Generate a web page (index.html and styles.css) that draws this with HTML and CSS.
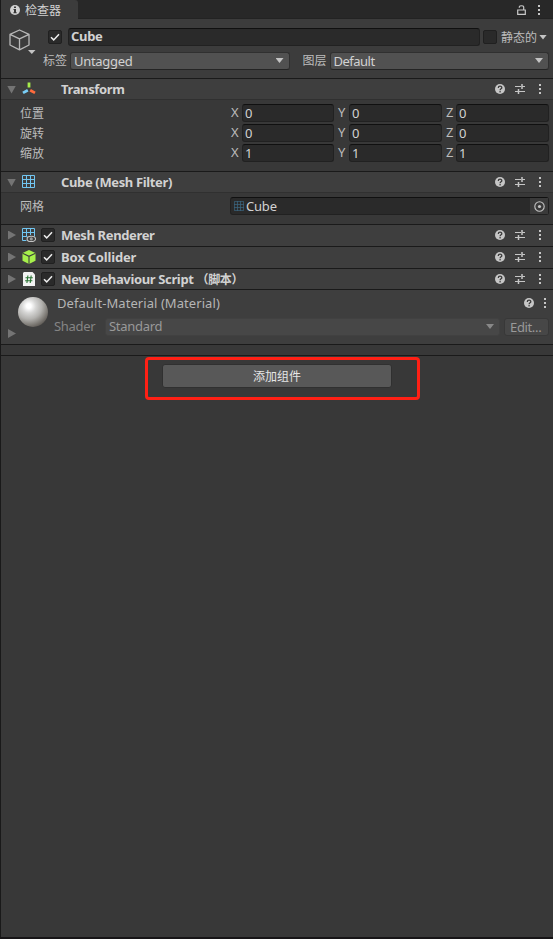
FILE: index.html
```html
<!DOCTYPE html>
<html lang="zh-CN">
<head>
<meta charset="utf-8">
<title>检查器</title>
<link rel="stylesheet" href="styles.css">
</head>
<body>
<svg class="defs" aria-hidden="true">
  <symbol id="help" viewBox="0 0 10 10"><circle cx="5" cy="5" r="5" fill="#c6c6c6"/><path d="M3.3 3.9C3.3 1.6 6.8 1.7 6.8 3.7C6.8 4.9 5.1 4.8 5.1 6.2" fill="none" stroke="#3b3b3b" stroke-width="1.3"/><rect x="4.4" y="7.1" width="1.4" height="1.3" fill="#3b3b3b"/></symbol>
  <symbol id="preset" viewBox="0 0 10 10"><path d="M0 2.5h6M7 2.5h3M0 7.5h3M4 7.5h6" stroke="#c6c6c6" stroke-width="1.1"/><path d="M7 0v5M3.5 5v5" stroke="#c6c6c6" stroke-width="1.5"/></symbol>
  <symbol id="dots" viewBox="0 0 2 10"><path d="M0 0h2v2H0zM0 4h2v2H0zM0 8h2v2H0z" fill="#c6c6c6"/></symbol>
  <symbol id="check" viewBox="0 0 14 14"><path d="M3 7.3L5.7 9.9L11 4.3" fill="none" stroke="#eee" stroke-width="1.5"/></symbol>
  <symbol id="grid" viewBox="0 0 13 13"><path d="M.5.5h12v12H.5zM4.5 0v13M8.5 0v13M0 4.5h13M0 8.5h13" fill="none" stroke="currentColor"/></symbol>
</svg>
<main class="inspector">
  <header class="tabs">
    <div class="tab">
      <svg class="info" viewBox="0 0 10 10"><circle cx="5" cy="5" r="5" fill="#d0d0d0"/><path d="M4 1.5h2v1.6H4zM3.5 4H6v3.3h.7v1H3.4v-1H4V5h-.5z" fill="#383838"/></svg>
      <span>检查器</span>
    </div>
    <svg class="lock" viewBox="0 0 9 10"><path d="M.7 5h7.6v4.3H.7zM2.3 2.7V2C2.3.3 6.7.3 6.7 2v3" fill="none" stroke="#c8c8c8" stroke-width="1.2"/></svg>
    <svg class="dots"><use href="#dots"/></svg>
  </header>

  <section class="object">
    <svg class="cube" viewBox="0 0 27 28"><path d="M10.5 1L20 5.4V16L10.5 20.8L1 16V5.4zM1 5.4l9.5 4.4L20 5.4M10.5 9.8v11" fill="none" stroke="#b8b8b8" stroke-width="1.3" stroke-linejoin="round"/><path d="M19 21h7.5L22.8 25z" fill="#c4c4c4"/></svg>
    <div class="object-fields">
      <div class="name-row">
        <span class="box"><svg><use href="#check"/></svg></span>
        <span class="field name">Cube</span>
        <span class="box static"></span>
        <span class="label">静态的</span>
        <i class="arrow small"></i>
      </div>
      <div class="tag-row">
        <span class="label tag-label">标签</span>
        <span class="select">Untagged<i class="arrow"></i></span>
        <span class="label layer-label">图层</span>
        <span class="select">Default<i class="arrow"></i></span>
      </div>
    </div>
  </section>

  <section class="component">
    <div class="head open"><i class="fold down"></i>
      <svg class="icon" viewBox="0 0 14 14"><g stroke-width="2.8"><path d="M7 .5v5" stroke="#a7ed4c"/><path d="M5.8 8.2L1 10.9" stroke="#79cdf5"/><path d="M8.2 8.2L13 10.9" stroke="#ff6b3d"/></g></svg>
      <h2>Transform</h2>
      <svg class="help"><use href="#help"/></svg><svg class="preset"><use href="#preset"/></svg><svg class="dots"><use href="#dots"/></svg>
    </div>
    <div class="vectors">
      <div class="vector"><span class="label">位置</span><b>X</b><span class="field">0</span><b>Y</b><span class="field">0</span><b>Z</b><span class="field">0</span></div>
      <div class="vector"><span class="label">旋转</span><b>X</b><span class="field">0</span><b>Y</b><span class="field">0</span><b>Z</b><span class="field">0</span></div>
      <div class="vector"><span class="label">缩放</span><b>X</b><span class="field">1</span><b>Y</b><span class="field">1</span><b>Z</b><span class="field">1</span></div>
    </div>
  </section>

  <section class="component">
    <div class="head open"><i class="fold down"></i>
      <svg class="icon mesh" viewBox="0 0 14 14"><use href="#grid" width="13" height="13"/></svg>
      <h2>Cube (Mesh Filter)</h2>
      <svg class="help"><use href="#help"/></svg><svg class="preset"><use href="#preset"/></svg><svg class="dots"><use href="#dots"/></svg>
    </div>
    <div class="mesh-row">
      <span class="label">网格</span>
      <span class="field object-field"><svg class="mini"><use href="#grid"/></svg>Cube
        <span class="picker"><svg viewBox="0 0 11 11"><circle cx="5.5" cy="5.5" r="4.7" fill="none" stroke="#c4c4c4" stroke-width="1.1"/><circle cx="5.5" cy="5.5" r="1.6" fill="#c4c4c4"/></svg></span>
      </span>
    </div>
  </section>

  <section class="component">
    <div class="head"><i class="fold"></i>
      <svg class="icon mesh" viewBox="0 0 14 14"><use href="#grid" width="13" height="13"/><path d="M3.5 10.5C6 5.8 12 5.8 14 10.5V14H5z" fill="#3e3e3e"/><ellipse cx="9.3" cy="10.9" rx="4.2" ry="2.7" fill="#3e3e3e" stroke="#c4c4c4" stroke-width="1.1"/><circle cx="9.3" cy="10.9" r="1.6" fill="#999"/></svg>
      <span class="box"><svg><use href="#check"/></svg></span>
      <h2>Mesh Renderer</h2>
      <svg class="help"><use href="#help"/></svg><svg class="preset"><use href="#preset"/></svg><svg class="dots"><use href="#dots"/></svg>
    </div>
  </section>
  <section class="component">
    <div class="head"><i class="fold"></i>
      <svg class="icon" viewBox="0 0 14 14"><path d="M7 0l6.5 3v7.7L7 14L.5 10.7V3z" fill="#a6f04b"/><path d="M.5 3.2L7 6.3l6.5-3.1M7 6.3V14" fill="none" stroke="#3e3e3e" stroke-width="1.1"/></svg>
      <span class="box"><svg><use href="#check"/></svg></span>
      <h2 class="collider">Box Collider</h2>
      <svg class="help"><use href="#help"/></svg><svg class="preset"><use href="#preset"/></svg><svg class="dots"><use href="#dots"/></svg>
    </div>
  </section>
  <section class="component">
    <div class="head script"><i class="fold"></i>
      <svg class="icon" viewBox="0 0 14 14"><path d="M2 0h8.5L13 2.5V14H1V1z" fill="#f2f2f2"/><path d="M5.9 3.5L4.9 11M9.2 3.5L8.2 11M3.5 5.8h7.3M3.1 8.7h7.3" stroke="#287332" stroke-width="1.1"/></svg>
      <span class="box"><svg><use href="#check"/></svg></span>
      <h2>New Behaviour Script <span class="note">（脚本）</span></h2>
      <svg class="help"><use href="#help"/></svg><svg class="preset"><use href="#preset"/></svg><svg class="dots"><use href="#dots"/></svg>
    </div>
  </section>

  <section class="material">
    <div class="preview"><div class="sphere"></div><i class="fold"></i></div>
    <div class="material-body">
      <div class="material-title"><span>Default-Material (Material)</span><svg class="help"><use href="#help"/></svg><svg class="dots"><use href="#dots"/></svg></div>
      <div class="shader"><span class="shader-label">Shader</span><span class="select dim">Standard<i class="arrow"></i></span><span class="edit">Edit...</span></div>
    </div>
  </section>
  <div class="divider"></div>
  <div class="callout"><button>添加组件</button></div>
</main>
</body>
</html>
```
FILE: styles.css
```css
* { box-sizing: border-box; }
body {
  margin: 0;
  background: #383838;
  color: #d2d2d2;
  font: 13px/18px "Noto Sans", "Noto Sans CJK SC", sans-serif;
  white-space: nowrap;
}
svg { display: block; flex: none; }
.defs { position: absolute; width: 0; height: 0; }
.inspector {
  height: 939px;
  overflow: hidden;
  border-left: 1px solid #191919;
  border-bottom: 2px solid #171517;
}
.label { font-size: 12px; color: #bcbcbc; }

.tabs { display: flex; align-items: center; height: 19px; padding-right: 13px; background: #282828; box-shadow: inset 0 -1px #232323; }
.tab { display: flex; align-items: center; gap: 5px; width: 77px; height: 19px; padding: 2px 0 0 9px; background: #3c3c3c; border-radius: 0 3px 0 0; font-size: 12px; }
.tab span { padding-top: 1px; }
.info { width: 10px; height: 10px; margin-top: -2px; }
.lock { width: 9px; height: 10px; margin-left: auto; margin-right: 12px; }
.dots { width: 2px; height: 10px; }
.help, .preset { width: 10px; height: 10px; }

.object { display: flex; height: 59px; background: #3c3c3c; padding: 9px 4px 0 7px; }
.cube { width: 27px; height: 28px; margin: 1px 0 0 .5px; }
.object-fields { flex: 1; display: flex; flex-direction: column; gap: 6px; padding-left: 7.5px; }
.name-row, .tag-row { display: flex; align-items: center; height: 18px; }
.name-row { padding-left: 5px; }
.box { flex: none; width: 14px; height: 14px; background: #2a2a2a; border: 1px solid #202020; border-radius: 2px; }
.box svg { width: 14px; height: 14px; margin: -1px; }
.field { display: block; height: 18px; padding-left: 2px; line-height: 17px; background: #2a2a2a; border: 1px solid #212121; border-top-color: #101010; border-radius: 3px; }
.name { width: 412px; margin: 0 3px 0 6px; font-weight: 700; line-height: 15px; letter-spacing: -.3px; }
.name-row .label { margin-left: 4px; padding-top: 1px; }
.arrow { flex: none; width: 8px; height: 5px; background: #c4c4c4; clip-path: polygon(0 0, 100% 0, 50% 100%); }
.arrow.small { margin-left: 2px; }
.tag-label { width: 27px; }
.layer-label { width: 27px; margin-left: 13px; }
.select { flex: 1; display: flex; align-items: center; justify-content: space-between; height: 18px; padding: 0 5px 1px 3px; letter-spacing: -.3px; background: #515151; border: 1px solid #303030; border-bottom-color: #242424; border-radius: 3px; }
.layer-label + .select { letter-spacing: -.5px; }

.component { border-top: 1px solid #1a1a1a; }
.head { display: flex; align-items: center; height: 21px; padding: 0 12px 1px 7px; background: #3e3e3e; }
.head.open { padding-bottom: 0; border-bottom: 1px solid #303030; }
.head.script { height: 20px; padding-bottom: 0; }
.fold { flex: none; width: 8px; height: 9px; background: #747474; clip-path: polygon(0 0, 100% 50%, 0 100%); }
.fold.down { width: 9px; height: 8px; clip-path: polygon(0 0, 100% 0, 50% 100%); margin: 1px 0 0 -1px; }
.icon { width: 14px; height: 14px; margin-left: 6px; }
.mesh { color: #71c6f2; }
.head .box { margin-left: 5px; }
.head h2 { margin: 0 auto 0 6px; font-size: 13px; line-height: 18px; letter-spacing: -.36px; }
.head.open h2 { margin-left: 25px; }
.head h2.collider { letter-spacing: -.18px; }
.note { font-size: 12px; }
.head .preset { margin: 0 14px 0 10px; }
.vectors { display: grid; gap: 2px; padding: 4px 4px 9px 19px; }
.vector { display: grid; grid-template-columns: 211px 11px 92px 15px 93px 14px 93px; height: 18px; }
.vector .label, .mesh-row .label { padding-top: 1px; line-height: 17px; }
.vector b { font-weight: 400; line-height: 16px; color: #bcbcbc; }
.vector b:not(:nth-child(2)) { padding-left: 4px; }
.mesh-row { display: flex; height: 31px; padding: 4px 4px 0 19px; }
.mesh-row .label { width: 210px; }
.object-field { flex: 1; display: flex; align-items: center; gap: 2px; padding-left: 3px; letter-spacing: -.2px; }
.mini { width: 10px; height: 10px; color: #3b6680; }
.picker { display: grid; place-items: center; width: 18px; height: 16px; margin-left: auto; background: #3a3a3a; }
.picker svg { width: 11px; height: 11px; }

.material { display: flex; height: 55px; padding: 0 4px 0 7px; background: #3e3e3e; border-top: 1px solid #1a1a1a; }
.preview { width: 46px; padding-top: 7px; }
.sphere { width: 30px; height: 30px; margin-left: 10px; border-radius: 50%; background: radial-gradient(circle at 36% 30%, #fff 0 8%, #d6d6d5 25%, #b3b2af 46%, #85827d 64%, #5b5752 80%, #44403c 92%); }
.preview .fold { display: block; margin-top: 2px; }
.material-body { flex: 1; color: #b5b5b5; }
.material-title { display: flex; align-items: center; height: 26px; padding-left: 3px; letter-spacing: .07px; }
.material-title .help { margin: 0 10px 0 auto; }
.material-title .dots { margin-right: 3px; }
.shader { display: flex; height: 18px; margin-top: 2px; line-height: 17px; color: #858585; }
.shader-label { width: 51px; letter-spacing: -.3px; }
.select.dim { background: #474747; border-color: #414141; color: #999; }
.dim .arrow { background: #888; }
.edit { width: 45px; height: 18px; margin-left: 4px; padding-left: 5px; line-height: 16px; letter-spacing: -.35px; color: #999; background: #474747; border: 1px solid #383838; border-radius: 3px; }
.divider { height: 12px; border: 1px solid #1a1a1a; border-width: 1px 0; }
.callout { width: 275px; height: 43px; margin: 1px 0 0 144px; padding: 4px 14px; border: 3px solid #ff2015; border-radius: 4px; }
.callout button { display: block; width: 230px; height: 24px; padding: 0; color: #e6e6e6; background: #585858; border: 1px solid #303030; border-radius: 3px; font: 12px/20px "Noto Sans CJK SC", sans-serif; }
```
